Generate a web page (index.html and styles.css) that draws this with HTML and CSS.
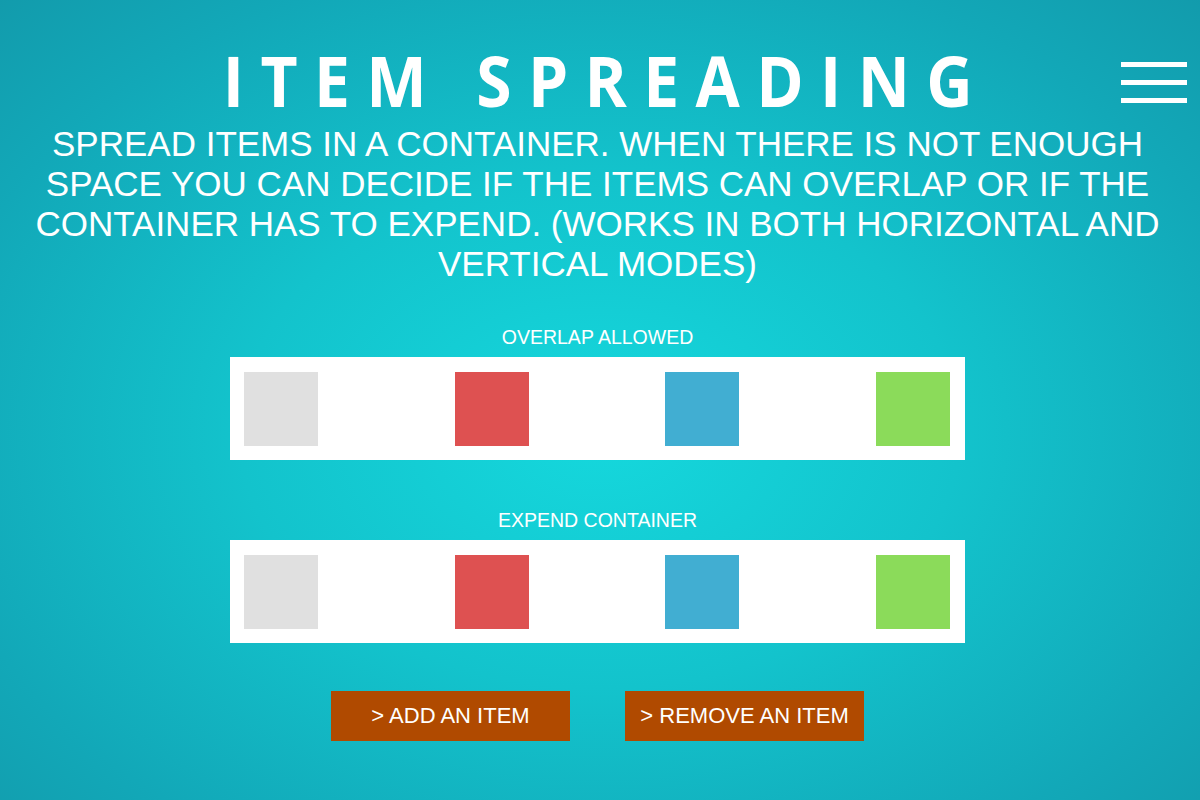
FILE: index.html
```html
<!DOCTYPE html>
<html>
<head>
<meta charset="utf-8">
<link rel="stylesheet" href="styles.css">
</head>
<body>
<div class="page">
  <header class="header">
    <h1 class="title">ITEM SPREADING</h1>
    <div class="menu" aria-label="menu">
      <span class="menu-line"></span>
      <span class="menu-line"></span>
      <span class="menu-line"></span>
    </div>
  </header>
  <p class="intro">SPREAD ITEMS IN A CONTAINER. WHEN THERE IS NOT ENOUGH SPACE YOU CAN DECIDE IF THE ITEMS CAN OVERLAP OR IF THE CONTAINER HAS TO EXPEND. (WORKS IN BOTH HORIZONTAL AND VERTICAL MODES)</p>

  <section class="demo">
    <div class="label">OVERLAP ALLOWED</div>
    <div class="box">
      <div class="item grey"></div>
      <div class="item red"></div>
      <div class="item blue"></div>
      <div class="item green"></div>
    </div>
  </section>

  <section class="demo demo-second">
    <div class="label">EXPEND CONTAINER</div>
    <div class="box">
      <div class="item grey"></div>
      <div class="item red"></div>
      <div class="item blue"></div>
      <div class="item green"></div>
    </div>
  </section>

  <div class="actions">
    <button class="btn">&gt; ADD AN ITEM</button>
    <button class="btn">&gt; REMOVE AN ITEM</button>
  </div>
</div>
</body>
</html>
```

FILE: styles.css
```css
html, body {
  margin: 0;
  padding: 0;
  height: 100%;
}
body {
  background: radial-gradient(ellipse 75% 80% at 50% 54%, #15d8dd 0%, #13c3cc 40%, #12a8b8 75%, #1298a9 100%);
  font-family: "Liberation Sans", Arial, sans-serif;
  color: #ffffff;
  overflow: hidden;
}
.page {
  width: 1195px;
  height: 800px;
  display: flex;
  flex-direction: column;
  align-items: center;
}
.header {
  width: 100%;
  display: flex;
  justify-content: center;
  padding-top: 46px;
}
.title {
  margin: 0;
  font-family: "Open Sans", "DejaVu Sans", sans-serif;
  font-weight: 700;
  font-size: 69px;
  line-height: 69px;
  letter-spacing: 0.255em;
  margin-right: -0.255em;
  transform: scaleX(0.93);
}
.menu {
  position: absolute;
  right: 13px;
  top: 62px;
  width: 66px;
  display: flex;
  flex-direction: column;
  gap: 13px;
}
.menu-line {
  display: block;
  height: 5px;
  background: #ffffff;
}
.intro {
  margin: 9px 0 0;
  width: 1150px;
  text-align: center;
  font-size: 35px;
  line-height: 40px;
}
.demo {
  margin-top: 42px;
  display: flex;
  flex-direction: column;
  align-items: center;
}
.demo-second {
  margin-top: 49px;
}
.label {
  font-size: 19.5px;
  line-height: 22px;
  margin-bottom: 9px;
}
.box {
  width: 735px;
  height: 103px;
  box-sizing: border-box;
  padding: 15px 15px 15px 14px;
  background: #ffffff;
  display: flex;
  justify-content: space-between;
}
.item {
  width: 74px;
  height: 74px;
}
.grey { background: #e0e0e0; }
.red { background: #de5151; }
.blue { background: #41aed2; }
.green { background: #8bdb5a; }
.actions {
  margin-top: 48px;
  display: flex;
  gap: 55px;
}
.btn {
  width: 239px;
  height: 50px;
  border: 0;
  border-radius: 0;
  background: #b04a00;
  color: #ffffff;
  font-family: "Liberation Sans", Arial, sans-serif;
  font-size: 22px;
  padding: 0;
  cursor: pointer;
}
```
